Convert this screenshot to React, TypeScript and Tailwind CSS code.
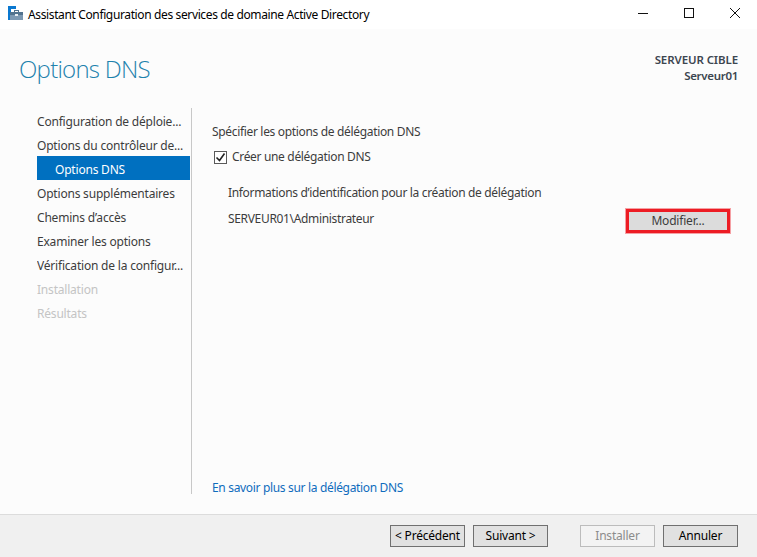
export default function App() {
  const steps = [
    { t: "Configuration de déploie...", c: "text-[#3c3c3c]" },
    { t: "Options du contrôleur de...", c: "text-[#3c3c3c]" },
    { t: "Options DNS", c: "bg-[#0070c0] text-white pl-[18px]" },
    { t: "Options supplémentaires", c: "text-[#3c3c3c]" },
    { t: "Chemins d’accès", c: "text-[#3c3c3c]" },
    { t: "Examiner les options", c: "text-[#3c3c3c]" },
    { t: "Vérification de la configur...", c: "text-[#3c3c3c]" },
    { t: "Installation", c: "text-[#c4c4c4]" },
    { t: "Résultats", c: "text-[#c4c4c4]" },
  ];
  return (
    <div className="w-[757px] h-[557px] flex flex-col bg-[#fcfcfc] text-[12px] overflow-hidden font-['Noto_Sans','Open_Sans',sans-serif]">
      <div className="h-[29px] shrink-0 bg-white flex items-center">
        <svg width="16" height="16" viewBox="0 0 16 16" className="ml-[7px] mt-[-1px]">
          <rect x="1" y="0" width="3" height="14" fill="#0a78d0" />
          <rect x="4" y="0" width="5" height="3" fill="#0a78d0" />
          <rect x="3" y="9" width="13" height="5" fill="#7d99b3" />
          <rect x="3" y="6" width="13" height="3" fill="#52738f" />
          <rect x="7.5" y="4.5" width="4" height="2" fill="none" stroke="#52738f" strokeWidth="1" />
          <rect x="8" y="8" width="3" height="2" fill="#e8eef3" />
        </svg>
        <span className="ml-[5px] text-black tracking-[-0.37px]">Assistant Configuration des services de domaine Active Directory</span>
        <div className="ml-auto flex items-center text-black">
          <svg width="46" height="29" viewBox="0 0 46 29"><path d="M18 13.5h10" stroke="#111" strokeWidth="1" /></svg>
          <svg width="46" height="29" viewBox="0 0 46 29"><rect x="18.5" y="8.5" width="9" height="9" fill="none" stroke="#111" /></svg>
          <svg width="46" height="29" viewBox="0 0 46 29" className="mr-[-1px]"><path d="M18 8l10 10M28 8L18 18" stroke="#111" strokeWidth="1" /></svg>
        </div>
      </div>

      <div className="h-[79px] shrink-0 flex justify-between px-[19px]">
        <h1 className="text-[24px] leading-[32px] mt-[24px] font-light tracking-[-0.75px] text-[#1e82ad] font-['Open_Sans','Noto_Sans',sans-serif]">Options DNS</h1>
        <div className="mt-[23px] text-right font-semibold text-[#3c4650] leading-[16px] text-[11.5px] tracking-[-0.1px]">
          <div>SERVEUR CIBLE</div>
          <div className="tracking-[-0.3px]">Serveur01</div>
        </div>
      </div>

      <div className="flex-1 flex min-h-0">
        <nav className="w-[192px] shrink-0 flex flex-col pl-[37px] pr-[1px] h-[386px] border-r border-[#c8c8c8] tracking-[-0.2px]">
          {steps.map((s) => (
            <div key={s.t} className={`h-[24px] leading-[28px] whitespace-nowrap overflow-hidden ${s.c}`}>{s.t}</div>
          ))}
        </nav>
        <main className="flex-1 flex flex-col pl-[20px] pr-[26px] pt-[16px] pb-[18px] text-[#3c3c3c] tracking-[-0.33px]">
          <div className="leading-[16px]">Spécifier les options de délégation DNS</div>
          <label className="flex items-center mt-[9px] h-[16px]">
            <span className="w-[13px] h-[13px] ml-[2px] border border-[#5a5a5a] bg-white flex items-center justify-center">
              <svg width="11" height="11" viewBox="0 0 11 11"><path d="M1.5 5.5l3 3 5-7" fill="none" stroke="#222" strokeWidth="1.6" /></svg>
            </span>
            <span className="ml-[5px]">Créer une délégation DNS</span>
          </label>
          <div className="ml-[16px] mt-[20px] leading-[16px]">Informations d’identification pour la création de délégation</div>
          <div className="ml-[16px] mt-[2px] flex items-start justify-between">
            <span className="mt-[8px] leading-[16px]">SERVEUR01\Administrateur</span>
            <button className="w-[104px] h-[24px] mt-[6px] mr-[1px] bg-[#dcdcdc] border-[3px] border-[#ed1c24] outline outline-1 outline-[#f5a0a4] text-[#3c3c3c] tracking-[-0.2px] flex items-center justify-center">Modifier...</button>
          </div>
          <a className="mt-auto text-[#0f6cbd] leading-[16px]">En savoir plus sur la délégation DNS</a>
        </main>
      </div>

      <div className="h-[43px] shrink-0 bg-[#f0f0f0] border-t border-[#dcdcdc] flex items-center pl-[390px] text-black tracking-[-0.2px]">
        <button className="w-[75px] h-[22px] bg-[#e1e1e1] border border-[#707070] flex items-center justify-center">&lt; Précédent</button>
        <button className="w-[75px] h-[22px] ml-[8px] bg-[#e1e1e1] border border-[#707070] flex items-center justify-center">Suivant &gt;</button>
        <button className="w-[75px] h-[22px] ml-[32px] bg-[#f3f3f3] border border-[#bcbcbc] text-[#8c8c8c] flex items-center justify-center">Installer</button>
        <button className="w-[75px] h-[22px] ml-[8px] bg-[#e1e1e1] border border-[#707070] flex items-center justify-center">Annuler</button>
      </div>
    </div>
  );
}
